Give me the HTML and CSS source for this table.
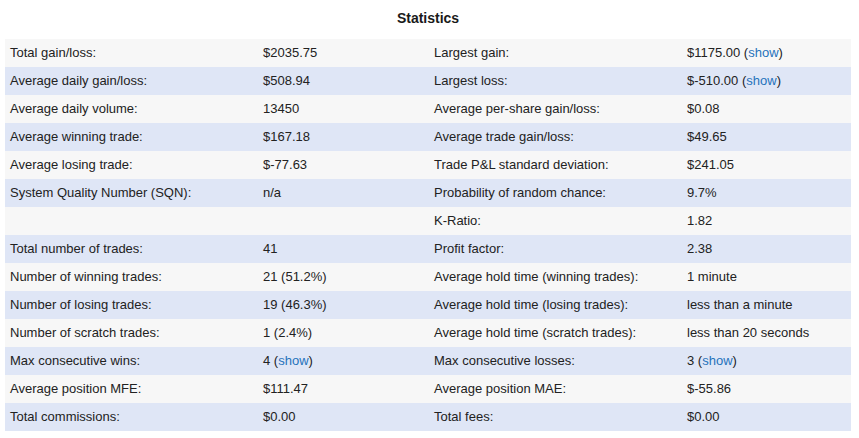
FILE: index.html
```html
<!DOCTYPE html>
<html>
<head>
<meta charset="utf-8">
<link rel="stylesheet" href="styles.css">
</head>
<body>
<div class="page">
  <h2 class="title">Statistics</h2>
  <table class="stats">
    <colgroup>
      <col class="c-label"><col class="c-value"><col class="c-label"><col class="c-value2">
    </colgroup>
    <tbody>
      <tr><td>Total gain/loss:</td><td>$2035.75</td><td>Largest gain:</td><td>$1175.00 (<a href="#">show</a>)</td></tr>
      <tr><td>Average daily gain/loss:</td><td>$508.94</td><td>Largest loss:</td><td>$-510.00 (<a href="#">show</a>)</td></tr>
      <tr><td>Average daily volume:</td><td>13450</td><td>Average per-share gain/loss:</td><td>$0.08</td></tr>
      <tr><td>Average winning trade:</td><td>$167.18</td><td>Average trade gain/loss:</td><td>$49.65</td></tr>
      <tr><td>Average losing trade:</td><td>$-77.63</td><td>Trade P&amp;L standard deviation:</td><td>$241.05</td></tr>
      <tr><td>System Quality Number (SQN):</td><td>n/a</td><td>Probability of random chance:</td><td>9.7%</td></tr>
      <tr><td></td><td></td><td>K-Ratio:</td><td>1.82</td></tr>
      <tr><td>Total number of trades:</td><td>41</td><td>Profit factor:</td><td>2.38</td></tr>
      <tr><td>Number of winning trades:</td><td>21 (51.2%)</td><td>Average hold time (winning trades):</td><td>1 minute</td></tr>
      <tr><td>Number of losing trades:</td><td>19 (46.3%)</td><td>Average hold time (losing trades):</td><td>less than a minute</td></tr>
      <tr><td>Number of scratch trades:</td><td>1 (2.4%)</td><td>Average hold time (scratch trades):</td><td>less than 20 seconds</td></tr>
      <tr><td>Max consecutive wins:</td><td>4 (<a href="#">show</a>)</td><td>Max consecutive losses:</td><td>3 (<a href="#">show</a>)</td></tr>
      <tr><td>Average position MFE:</td><td>$111.47</td><td>Average position MAE:</td><td>$-55.86</td></tr>
      <tr><td>Total commissions:</td><td>$0.00</td><td>Total fees:</td><td>$0.00</td></tr>
    </tbody>
  </table>
</div>
</body>
</html>
```
FILE: styles.css
```css
html, body {
  margin: 0;
  padding: 0;
  background: #ffffff;
}
body {
  font-family: "Liberation Sans", Arial, Helvetica, sans-serif;
  font-size: 13px;
  color: #222222;
}
.page {
  padding: 0 8px 0 5px;
}
.title {
  margin: 0;
  height: 39px;
  line-height: 37px;
  font-size: 14px;
  font-weight: bold;
  text-align: center;
  color: #1a1a1a;
}
.stats {
  width: 846px;
  border-collapse: collapse;
  table-layout: fixed;
}
.c-label { width: 253px; }
.c-value { width: 171px; }
.c-value2 { width: 169px; }
.stats td {
  height: 28px;
  padding: 0 5px;
  line-height: 28px;
  box-sizing: border-box;
  white-space: nowrap;
  vertical-align: middle;
}
.stats tr:nth-child(odd) { background: #f7f7f7; }
.stats tr:nth-child(even) { background: #dfe6f6; }
.stats a {
  color: #1f73bb;
  text-decoration: none;
}
```
